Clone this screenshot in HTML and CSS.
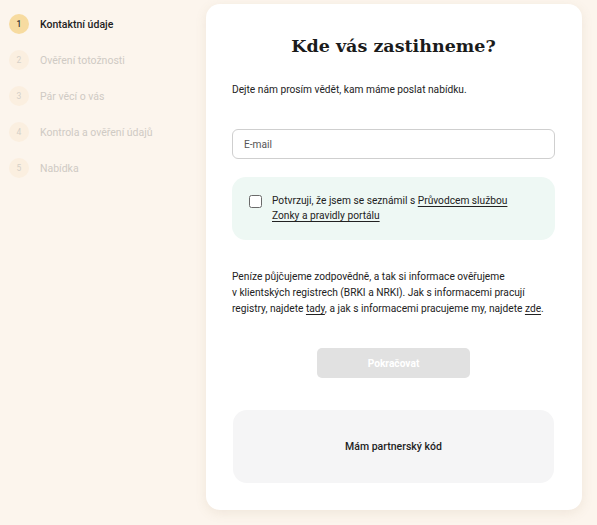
FILE: index.html
```html
<!DOCTYPE html>
<html lang="cs">
<head>
<meta charset="utf-8">
<title>Kde vás zastihneme?</title>
<link rel="stylesheet" href="styles.css">
</head>
<body>
<div class="page">
  <nav class="steps">
    <div class="step active"><span class="num">1</span><span class="label">Kontaktní údaje</span></div>
    <div class="step"><span class="num">2</span><span class="label">Ověření totožnosti</span></div>
    <div class="step"><span class="num">3</span><span class="label">Pár věcí o vás</span></div>
    <div class="step"><span class="num">4</span><span class="label">Kontrola a ověření údajů</span></div>
    <div class="step"><span class="num">5</span><span class="label">Nabídka</span></div>
  </nav>
  <main class="card">
    <h1 class="title">Kde vás zastihneme?</h1>
    <p class="intro">Dejte nám prosím vědět, kam máme poslat nabídku.</p>
    <div class="input">E-mail</div>
    <label class="consent">
      <span class="box"></span>
      <span class="consent-text">Potvrzuji, že jsem se seznámil s <a class="link">Průvodcem službou Zonky a pravidly portálu</a></span>
    </label>
    <p class="info">Peníze půjčujeme zodpovědně, a tak si informace ověřujeme v&nbsp;klientských registrech (BRKI a NRKI). Jak s informacemi pracují registry, najdete <a class="link">tady</a>, a jak s informacemi pracujeme my, najdete <a class="link">zde</a>.</p>
    <div class="btn-row"><button class="btn">Pokračovat</button></div>
    <div class="partner">Mám partnerský kód</div>
  </main>
</div>
</body>
</html>
```
FILE: styles.css
```css
* { box-sizing: border-box; }
html, body { margin: 0; padding: 0; }
body {
  background: #fcf5ed;
  font-family: Roboto, "Noto Sans", sans-serif;
  color: #222;
  width: 597px;
  height: 525px;
  overflow: hidden;
}
.page {
  display: flex;
  align-items: flex-start;
}
.steps {
  width: 206px;
  padding: 14px 0 0 9px;
  display: flex;
  flex-direction: column;
  gap: 16px;
}
.step {
  display: flex;
  align-items: center;
  gap: 11px;
  height: 20px;
}
.num {
  width: 20px;
  height: 20px;
  border-radius: 50%;
  background: #fbefe0;
  color: #d5cfc8;
  font-size: 8.5px;
  display: flex;
  align-items: center;
  justify-content: center;
}
.label {
  font-size: 10.5px;
  color: #cfcac4;
}
.step.active .num {
  background: #f7dba0;
  color: #333;
  font-weight: 500;
}
.step.active .label {
  color: #1e1e1e;
  font-weight: 500;
}
.card {
  margin-top: 4px;
  width: 376px;
  height: 506px;
  background: #fff;
  border-radius: 14px;
  box-shadow: 0 3px 12px rgba(150, 120, 80, 0.12);
  padding: 29px 27px 27px 26px;
}
.title {
  margin: 0;
  font-family: "DejaVu Serif", serif;
  font-weight: bold;
  font-size: 17.5px;
  line-height: 26px;
  text-align: center;
  color: #1b1b1b;
}
.intro {
  margin: 23px 0 0;
  font-size: 10.2px;
  line-height: 16px;
  color: #222;
}
.input {
  margin-top: 31px;
  height: 30px;
  border: 1px solid #cfcfcf;
  border-radius: 6px;
  padding: 0 11px;
  display: flex;
  align-items: center;
  font-size: 10.2px;
  color: #555;
}
.consent {
  margin-top: 18px;
  height: 63px;
  background: #eef8f4;
  border-radius: 14px;
  padding: 16px 20px 0 17px;
  display: flex;
  align-items: flex-start;
  gap: 10px;
}
.box {
  flex: none;
  margin-top: 2px;
  width: 13px;
  height: 13px;
  border: 1.5px solid #6a6a6a;
  border-radius: 2.5px;
  background: #fff;
}
.consent-text {
  font-size: 10.2px;
  line-height: 15px;
  color: #222;
}
.link {
  color: inherit;
  text-decoration: underline;
  text-underline-offset: 1.5px;
}
.info {
  margin: 29px 0 0;
  font-size: 10.2px;
  line-height: 16px;
  color: #222;
}
.btn-row {
  margin-top: 31px;
  display: flex;
  justify-content: center;
}
.btn {
  width: 153px;
  height: 30px;
  border: none;
  border-radius: 5px;
  background: #e1e1e1;
  color: #fff;
  font-family: Roboto, sans-serif;
  font-weight: bold;
  font-size: 10.2px;
}
.partner {
  margin-top: 32px;
  margin-left: 1px;
  margin-right: 1px;
  height: 73px;
  background: #f5f5f6;
  border-radius: 14px;
  display: flex;
  align-items: center;
  justify-content: center;
  font-size: 10.5px;
  font-weight: 500;
  color: #1e1e1e;
}
```
